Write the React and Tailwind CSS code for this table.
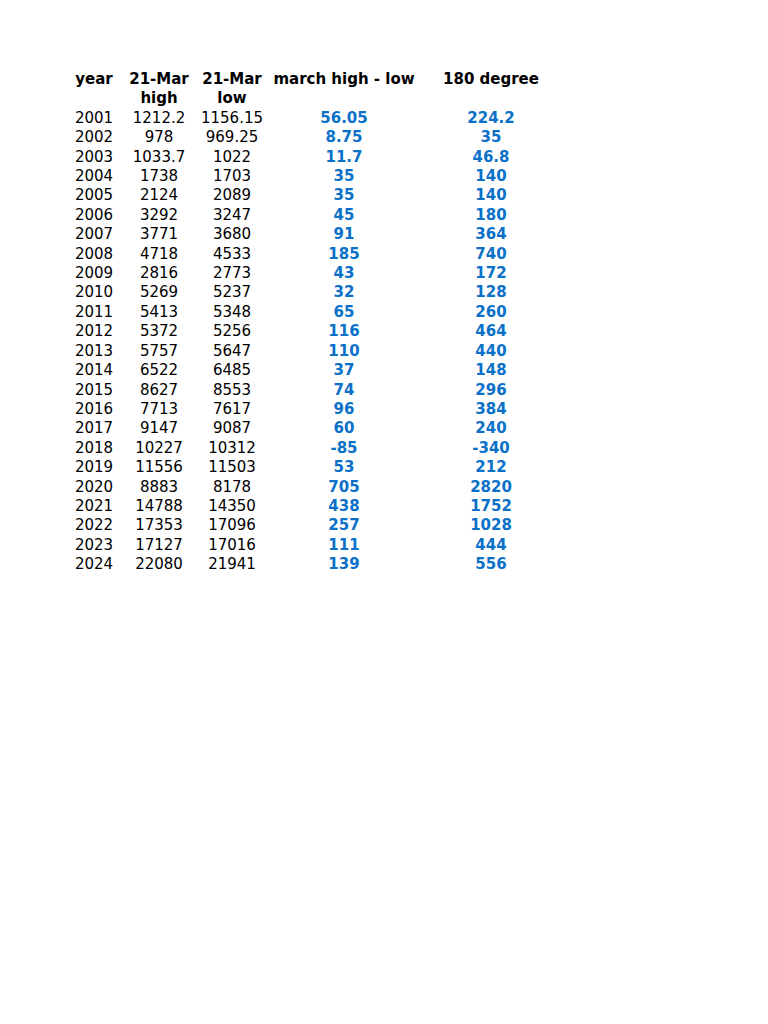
const rows = [
  ["2001", "1212.2", "1156.15", "56.05", "224.2"],
  ["2002", "978", "969.25", "8.75", "35"],
  ["2003", "1033.7", "1022", "11.7", "46.8"],
  ["2004", "1738", "1703", "35", "140"],
  ["2005", "2124", "2089", "35", "140"],
  ["2006", "3292", "3247", "45", "180"],
  ["2007", "3771", "3680", "91", "364"],
  ["2008", "4718", "4533", "185", "740"],
  ["2009", "2816", "2773", "43", "172"],
  ["2010", "5269", "5237", "32", "128"],
  ["2011", "5413", "5348", "65", "260"],
  ["2012", "5372", "5256", "116", "464"],
  ["2013", "5757", "5647", "110", "440"],
  ["2014", "6522", "6485", "37", "148"],
  ["2015", "8627", "8553", "74", "296"],
  ["2016", "7713", "7617", "96", "384"],
  ["2017", "9147", "9087", "60", "240"],
  ["2018", "10227", "10312", "-85", "-340"],
  ["2019", "11556", "11503", "53", "212"],
  ["2020", "8883", "8178", "705", "2820"],
  ["2021", "14788", "14350", "438", "1752"],
  ["2022", "17353", "17096", "257", "1028"],
  ["2023", "17127", "17016", "111", "444"],
  ["2024", "22080", "21941", "139", "556"],
];

export default function App() {
  return (
    <div className="min-h-[1024px] bg-white pl-[66px] pt-[70px] text-[15px] leading-[19.4px] text-black [font-family:'DejaVu_Sans',sans-serif]">
      <div className="grid grid-cols-[56px_74px_72px_152px_142px] text-center">
        <div className="font-bold">year</div>
        <div className="font-bold">21-Mar<br />high</div>
        <div className="font-bold">21-Mar<br />low</div>
        <div className="font-bold">march high - low</div>
        <div className="font-bold">180 degree</div>
        {rows.map((r) => (
          <div key={r[0]} className="contents">
            <div>{r[0]}</div>
            <div>{r[1]}</div>
            <div>{r[2]}</div>
            <div className="font-bold text-[#0a70c8]">{r[3]}</div>
            <div className="font-bold text-[#0a70c8]">{r[4]}</div>
          </div>
        ))}
      </div>
    </div>
  );
}
